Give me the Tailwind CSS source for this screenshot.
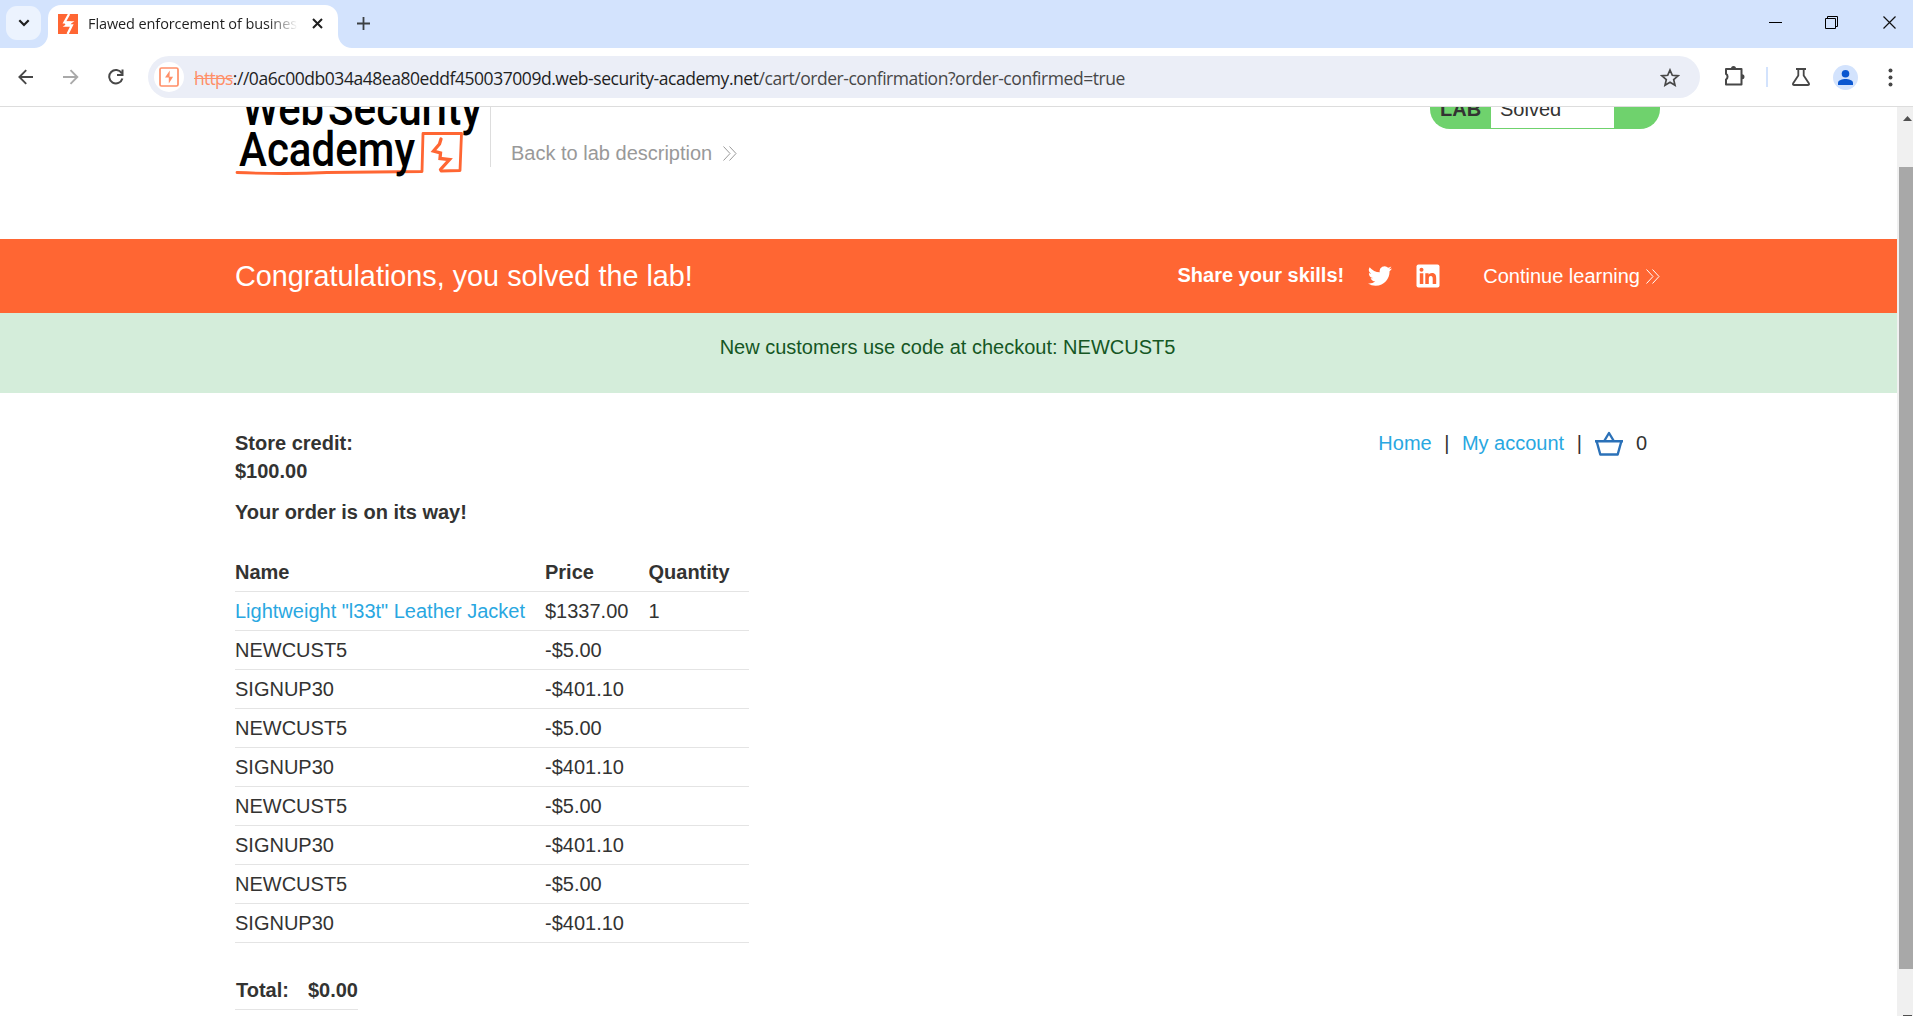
<!DOCTYPE html>
<html lang="en">
<head>
<meta charset="utf-8">
<title>Flawed enforcement of business rules</title>
<script src="https://cdn.jsdelivr.net/npm/@tailwindcss/browser@4"></script>
</head>
<body class="h-[1016px] w-[1913px] overflow-hidden bg-white font-['Liberation_Sans',Arial,sans-serif] text-[20px] leading-[28px] text-[#333332]">
<div class="flex h-[1016px] flex-col">
  <!-- tab strip -->
  <div class="flex h-12 shrink-0 items-start bg-[#d3e3fd] font-['Open_Sans',sans-serif]">
    <div class="mt-1.5 ml-1.5 flex h-[34px] w-[35px] items-center justify-center rounded-[11px] bg-[#ecf3fe]">
      <svg width="12" height="8" viewBox="0 0 12 8" fill="none" stroke="#1f1f1f" stroke-width="2.2"><path d="M1.3 1.3 6 6l4.700-4.700"/></svg>
    </div>
    <svg class="mt-[34px] -ml-[7px]" width="14" height="14"><path d="M14 0v14H0A14 14 0 0 0 14 0" fill="#fff"/></svg>
    <div class="mt-[5px] flex h-[43px] w-[290px] items-center rounded-t-[13px] bg-white pb-[9px] pl-2.5">
      <svg class="mt-[3px]" width="20" height="20" viewBox="0 0 20 20"><path fill="#ff6633" d="M0 0h20v20H0z"/><path fill="none" stroke="#fff" stroke-width="2.300" d="M10.800 0 6.200 8.300h6.300L8 11.500h5.500L9.300 20" transform="translate(.3 0)"/><path fill="#fff" d="m6 7.500 1.500 3.500 5.500-.5V7.500z"/></svg>
      <div class="mt-[3px] ml-[10px] w-[210px] overflow-hidden bg-linear-to-r from-[#1f1f1f] from-85% to-transparent bg-clip-text text-[14.500px] leading-6 tracking-[-0.1px] whitespace-nowrap text-transparent">Flawed enforcement of business rules</div>
      <svg class="mt-[3px] ml-[14px]" width="11" height="11" viewBox="0 0 11 11" stroke="#1f1f1f" stroke-width="2"><path d="m1 1 9 9M10 1l-9 9"/></svg>
    </div>
    <svg class="mt-[34px]" width="14" height="14"><path d="M0 0v14h14A14 14 0 0 1 0 0" fill="#fff"/></svg>
    <svg class="mt-[17px] ml-[5px]" width="13" height="13" stroke="#3c4043" stroke-width="1.800"><path d="M6.500 0v13M0 6.500h13"/></svg>
    <div class="mt-4 ml-auto flex gap-[43px] pr-[17px]">
      <svg width="13" height="13" stroke="#000"><path d="M0 6.500h13"/></svg>
      <svg width="13" height="13" fill="none" stroke="#000"><path d="M.5 2.500h10v10H.5zM2.500 2.500v-2h10v10h-2"/></svg>
      <svg class="ml-[2px]" width="13" height="13" stroke="#111" stroke-width="1.200"><path d="m.5.5 12 12m0-12-12 12"/></svg>
    </div>
  </div>
  <!-- toolbar -->
  <div class="flex h-[59px] shrink-0 items-center border-b border-[#dddddd] bg-white">
    <svg class="ml-[18px]" width="16" height="16" viewBox="0 0 16 16" fill="none" stroke="#474747" stroke-width="1.900"><path d="M15 8H1.500M8.200 1.200 1.400 8l6.800 6.800"/></svg>
    <svg class="ml-[29px]" width="16" height="16" viewBox="0 0 16 16" fill="none" stroke="#a9a9a9" stroke-width="1.900"><path d="M0 8h14M7.500 1.200 14.300 8l-6.800 6.800"/></svg>
    <svg class="ml-[29px]" width="16" height="16" viewBox="0 0 16 16" fill="none" stroke="#474747" stroke-width="2"><path d="M13.700 4.300A6.700 6.700 0 1 0 14.400 9.500M14.500.5v5.500H9"/></svg>
    <div class="ml-6 flex h-[42px] w-[1552px] items-center rounded-full bg-[#ebeef7] pl-1.5">
      <div class="flex h-[30px] w-[30px] items-center justify-center rounded-full bg-white">
        <svg width="20" height="20" viewBox="0 0 20 20" fill="none"><rect x="1" y="1" width="18" height="18" rx="1.500" stroke="#ff8f68" stroke-width="1.700"/><path d="M10.800 3.500 6 10.600h3.800V16.500l4.300-6.800h-3.600z" fill="#ff8f68"/></svg>
      </div>
      <div class="mt-0.5 ml-[10px] font-['Open_Sans',sans-serif] text-[17.500px] leading-6 tracking-[-0.450px] whitespace-nowrap text-[#474747]"><span class="tracking-[-0.700px] text-[#ff8f68] line-through">https</span><span class="text-[#1f1f1f]">://0a6c00db034a48ea80eddf450037009d.web-security-academy.net</span>/cart/order-confirmation?order-confirmed=true</div>
      <svg class="mr-5 ml-auto" width="20" height="19" viewBox="0 0 20 19" fill="none" stroke="#474747" stroke-width="1.700"><path d="m10 2 2.300 5.300 5.800.5-4.400 3.800 1.300 5.600-5-3-5 3 1.300-5.600L1.900 7.800l5.800-.5z"/></svg>
    </div>
    <svg class="-mt-1 ml-6" width="21" height="21" viewBox="0 0 21 21"><path fill="none" stroke="#474747" stroke-width="2" d="M2 4h15.500v15.500H2v-5a3.300 3.300 0 0 0 0-5.600z" stroke-linejoin="round"/><path fill="#474747" d="M7 3.500a2.500 2.500 0 0 1 5 0zM18 9.300a2.500 2.500 0 0 1 0 5z"/></svg>
    <div class="ml-[21px] h-5 w-0.5 bg-[#d3e3fd]"></div>
    <svg class="ml-6" width="18" height="18" viewBox="0 0 18 18" fill="none" stroke="#474747" stroke-width="1.800"><path d="M4 1h10M6.300 1v6.500L1.200 15.200q-.8 1.800 1 1.800h13.600q1.800 0 1-1.800L11.700 7.500V1"/></svg>
    <svg class="ml-[23px]" width="25" height="25" viewBox="0 0 25 25"><circle cx="12.500" cy="12.500" r="12.500" fill="#d3e3fd"/><g fill="#0b57d0"><circle cx="12.500" cy="8.800" r="3.800"/><path d="M5 20v-2.200c0-2.600 4.500-3.800 7.500-3.800s7.500 1.200 7.500 3.800V20z"/></g></svg>
    <svg class="ml-[30px]" width="5" height="19" fill="#474747"><circle cx="2.500" cy="2.500" r="2"/><circle cx="2.500" cy="9.500" r="2"/><circle cx="2.500" cy="16.500" r="2"/></svg>
  </div>

  <div class="flex min-h-0 flex-1">
    <main class="w-[1897px] overflow-hidden">
      <!-- lab header -->
      <header class="flex h-[132px] items-start pl-[234px]">
        <svg width="256" height="72" viewBox="234 107 256 72" font-family="Roboto, sans-serif" font-weight="500" font-size="48" fill="#000">
          <g fill="none" stroke="#ff6633" stroke-width="2.800" stroke-linejoin="round" stroke-linecap="round">
            <path d="M237 172.500q50 2 90 0l95-1 1-38 38.500 0-1.500 37-19 .5"/>
            <path d="m441 139-1.500 5-6 7 7 2-.5 5.500 9.500 1-9 10" stroke-width="3.300" stroke-linejoin="miter"/>
          </g>
          <text x="242" y="125" textLength="82" lengthAdjust="spacingAndGlyphs">Web</text>
          <text x="328" y="125" textLength="154" lengthAdjust="spacingAndGlyphs">Security</text>
          <text x="239" y="166" textLength="176" lengthAdjust="spacingAndGlyphs">Academy</text>
        </svg>
        <div class="h-[60px] border-l border-[#dddddd]"></div>
        <a class="mt-[32px] ml-[20px] flex items-center text-[#999999]">Back to lab description
          <svg class="ml-[11px]" width="14" height="15" fill="none" stroke="#999999"><path d="m.5.5 6.500 7-6.500 7M6.500.5l6.500 7-6.500 7"/></svg></a>
        <div class="mr-[237px] ml-auto h-[22px] w-[230px] overflow-hidden rounded-b-[20px] bg-[#6fd26d]">
          <div class="-mt-[11px] flex h-8">
            <div class="w-[61px] pl-[10px] font-bold"><span class="relative -top-px">LAB</span></div>
            <div class="w-[123px] bg-white pl-[9px]"><span class="relative -top-px">Solved</span></div>
          </div>
        </div>
      </header>

      <section class="flex h-[74px] items-center bg-[#ff6633] pr-[237px] pl-[235px] text-white">
        <h4 class="text-[28.800px] leading-9">Congratulations, you solved the lab!</h4>
        <span class="ml-auto pb-0.5 font-bold">Share your skills!</span>
        <svg class="ml-6" width="24" height="24" viewBox="0 0 24 24" fill="#fff"><path d="M23.950 4.570a10 10 0 0 1-2.820.77 4.960 4.960 0 0 0 2.160-2.720 9.900 9.900 0 0 1-3.120 1.180 4.920 4.920 0 0 0-8.380 4.480A13.930 13.930 0 0 1 1.640 3.160a4.920 4.920 0 0 0 1.520 6.570 4.900 4.900 0 0 1-2.230-.61v.06a4.920 4.920 0 0 0 3.950 4.830 5 5 0 0 1-2.210.08 4.940 4.940 0 0 0 4.600 3.420A9.870 9.870 0 0 1 0 19.540a13.940 13.940 0 0 0 7.550 2.210c9.050 0 14-7.500 14-13.980 0-.21 0-.42-.02-.63a9.940 9.940 0 0 0 2.460-2.550z"/></svg>
        <svg class="ml-6" width="24" height="24" viewBox="0 0 24 24"><rect x=".5" y=".5" width="23" height="23" rx="2" fill="#fff"/><g fill="#ff6633"><circle cx="5.500" cy="5.700" r="2"/><path d="M3.800 9.300h3.500V20H3.800zM9.300 9.300h3.300v1.500c.6-1 1.700-1.800 3.400-1.800 3.500 0 4.200 2.300 4.200 5.200V20h-3.500v-5.100c0-1.400-.2-2.800-1.900-2.800s-2 1.400-2 2.700V20H9.300z"/></g></svg>
        <a class="ml-[43px] flex items-center">Continue learning
          <svg class="ml-[6px]" width="14" height="15" fill="none" stroke="#fff"><path d="m.5.5 6.500 7-6.500 7M6.500.5l6.500 7-6.500 7"/></svg></a>
      </section>

      <section class="h-20 bg-[#d4edda] pt-5 pr-0.5 text-center text-[#155724]">New customers use code at checkout: NEWCUST5</section>

      <section class="pt-9 pr-[250px] pl-[235px]">
        <div class="flex items-start justify-between">
          <p class="font-bold">Store credit:<br>$100.00</p>
          <nav class="flex items-center gap-[12.500px]">
            <a class="text-[#29a7e1]">Home</a><span>|</span><a class="text-[#29a7e1]">My account</a><span>|</span>
            <svg class="ml-px" width="28" height="25" viewBox="0 0 28 25" fill="none" stroke="#2b71b8" stroke-width="2.400" stroke-linejoin="round"><path d="M0 10.200h28M1.700 10.500 5.300 23.500h17.400L26.300 10.500M9.500 9.500 14 2l4.500 7.500"/></svg>
            <span>0</span>
          </nav>
        </div>
        <h4 class="mt-[13px] font-bold">Your order is on its way!</h4>
        <div class="mt-[27px] grid w-[514px] auto-rows-[39px] grid-cols-[310px_103.500px_100.500px] [&>*]:border-b [&>*]:border-[#e4e4e4] [&>*]:py-[5px]">
          <b>Name</b><b>Price</b><b>Quantity</b>
          <a class="text-[#29a7e1]">Lightweight "l33t" Leather Jacket</a><span>$1337.00</span><span>1</span>
          <span>NEWCUST5</span><span>-$5.00</span><span></span>
          <span>SIGNUP30</span><span>-$401.10</span><span></span>
          <span>NEWCUST5</span><span>-$5.00</span><span></span>
          <span>SIGNUP30</span><span>-$401.10</span><span></span>
          <span>NEWCUST5</span><span>-$5.00</span><span></span>
          <span>SIGNUP30</span><span>-$401.10</span><span></span>
          <span>NEWCUST5</span><span>-$5.00</span><span></span>
          <span>SIGNUP30</span><span>-$401.10</span><span></span>
        </div>
        <div class="mt-7 flex h-[39px] w-[123px] justify-between border-b border-[#e4e4e4] py-[5px] pl-px font-bold"><span>Total:</span><span>$0.00</span></div>
      </section>
    </main>
    <!-- scrollbar -->
    <div class="flex w-4 flex-col items-end bg-[#f0f0f0]">
      <svg class="mt-[9px] mr-[1px]" width="9" height="5"><path d="M0 5 4.500 0 9 5z" fill="#505050"/></svg>
      <div class="mt-[46px] h-[802px] w-3.5 bg-[#a8a8a8]"></div>
      <div class="mt-auto mr-[1px] h-px w-[9px] bg-[#505050]"></div>
    </div>
  </div>
</div>
</body>
</html>
